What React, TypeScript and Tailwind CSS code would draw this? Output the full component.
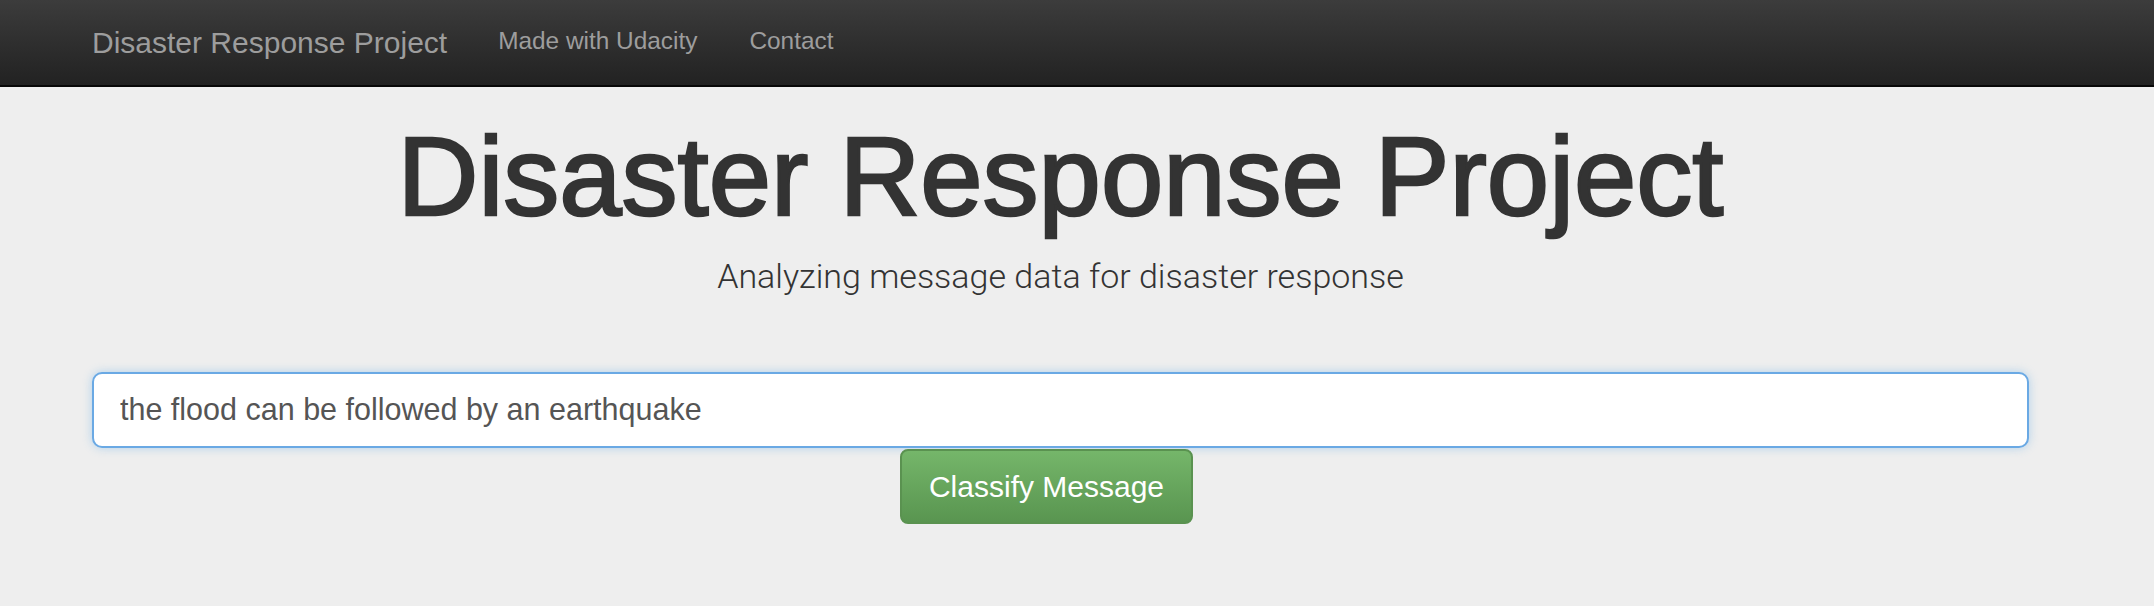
import React from "react";

export default function App() {
  return (
    <div className="min-h-[606px] w-full bg-[#eeeeee]" style={{ fontFamily: '"Liberation Sans", Arial, sans-serif' }}>
      <nav className="h-[87px] border-b-2 border-[#080808] bg-gradient-to-b from-[#3c3c3c] to-[#222222]">
        <div className="flex h-[85px] items-center pl-[92px]">
          <span className="text-[30px] leading-none text-[#9d9d9d]">Disaster Response Project</span>
          <span className="ml-[51px] mt-[-3px] text-[24.4px] leading-none text-[#9d9d9d]">Made with Udacity</span>
          <span className="ml-[52px] mt-[-3px] text-[24.4px] leading-none text-[#9d9d9d]">Contact</span>
        </div>
      </nav>
      <div className="pl-[92px] pr-[125px]">
        <h1 className="mt-[28px] text-center text-[112px] font-normal leading-[1.1] text-[#333333] [-webkit-text-stroke:2.5px_#333333]">
          Disaster Response Project
        </h1>
        <p
          className="mt-[18px] text-center text-[34px] font-light leading-[1.2] text-[#333333]"
          style={{ fontFamily: 'Roboto, "Liberation Sans", sans-serif' }}
        >
          Analyzing message data for disaster response
        </p>
        <div className="mt-[75px]">
          <input
            readOnly
            value="the flood can be followed by an earthquake"
            className="block h-[76px] w-full rounded-[10px] border-2 border-[#6aa9e4] bg-white px-[26px] text-[30.5px] text-[#555555] shadow-[0_0_10px_rgba(102,175,233,0.45)] outline-none"
            style={{ fontFamily: '"Liberation Sans", Arial, sans-serif' }}
          />
        </div>
        <div className="mt-px pl-[808px]">
          <button className="flex h-[75px] w-[293px] items-center justify-center rounded-[8px] border-2 border-[#5a9250] bg-gradient-to-b from-[#75b66a] to-[#599550] text-[30px] text-white">
            Classify Message
          </button>
        </div>
      </div>
    </div>
  );
}
